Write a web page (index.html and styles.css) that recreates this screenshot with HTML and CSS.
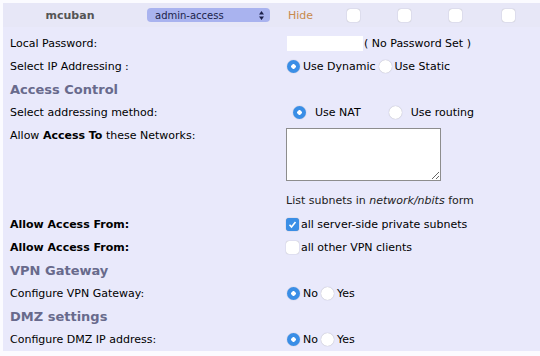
FILE: index.html
```html
<!DOCTYPE html>
<html lang="en">
<head>
    <meta charset="UTF-8">
    <title>VPN user settings</title>
    <link rel="stylesheet" href="styles.css">
</head>
<body>

    <div class="wrap">

        <!-- user row -->
        <div class="userBar">
            <div class="userName">mcuban</div>
            <div class="groupSelect">
                <span>admin-access</span>
                <svg class="arrows" width="5" height="9" viewBox="0 0 5 9">
                    <path d="M0 3.5L2.5 0L5 3.5Z M0 5.5L2.5 9L5 5.5Z" fill="#1b1f4a"/>
                </svg>
            </div>
            <div class="hide">Hide</div>
            <input type="checkbox" class="box">
            <input type="checkbox" class="box">
            <input type="checkbox" class="box">
            <input type="checkbox" class="box">
        </div>

        <div class="settings">
            <div class="row">
                <div class="label">Local Password:</div>
                <div class="field">
                    <input type="text" class="pass">( No Password Set )
                </div>
            </div>

            <div class="row">
                <div class="label">Select IP Addressing :</div>
                <div class="field">
                    <input type="radio" name="ip" checked>Use Dynamic
                    <input type="radio" name="ip">Use Static
                </div>
            </div>

            <div class="row head">Access Control</div>

            <div class="row">
                <div class="label">Select addressing method:</div>
                <div class="field nat">
                    <input type="radio" name="nat" checked><span class="opt">Use NAT</span>
                    <input type="radio" name="nat"><span>Use routing</span>
                </div>
            </div>

            <div class="row tall">
                <div class="label">Allow <b>Access To</b> these Networks:</div>
                <div class="field">
                    <textarea class="nets"></textarea>
                    <div class="hint">List subnets in <i>network/nbits</i> form</div>
                </div>
            </div>

            <div class="row">
                <div class="label"><b>Allow Access From:</b></div>
                <div class="field">
                    <input type="checkbox" class="box blue" checked>all server-side private subnets
                </div>
            </div>

            <div class="row">
                <div class="label"><b>Allow Access From:</b></div>
                <div class="field">
                    <input type="checkbox" class="box">all other VPN clients
                </div>
            </div>

            <div class="row head">VPN Gateway</div>

            <div class="row">
                <div class="label">Configure VPN Gateway:</div>
                <div class="field">
                    <input type="radio" name="gw" checked>No
                    <input type="radio" name="gw">Yes
                </div>
            </div>

            <div class="row head">DMZ settings</div>

            <div class="row">
                <div class="label">Configure DMZ IP address:</div>
                <div class="field">
                    <input type="radio" name="dmz" checked>No
                    <input type="radio" name="dmz">Yes
                </div>
            </div>
        </div>

    </div>

</body>
</html>
```

FILE: styles.css
```css
body{
    margin: 0;
    background-color: #fbfbff;
    font-family: "DejaVu Sans", Verdana, sans-serif;
    font-size: 11px;
    color: #000;
}

.wrap{
    width: 537px;
    margin-left: 3px;
    padding-top: 3px;
}

/* top user row */
.userBar{
    display: flex;
    align-items: center;
    height: 24px;
    background-color: #e7e7f7;
}

.userName{
    width: 134px;
    text-align: center;
    font-weight: bold;
    color: #555;
}

.groupSelect{
    display: flex;
    align-items: center;
    justify-content: space-between;
    width: 109px;
    height: 14px;
    margin-left: 10px;
    padding: 0 6px 0 8px;
    border-radius: 4px;
    background-color: #a9b3ef;
    color: #1b1f4a;
    font-size: 10px;
}

.hide{
    margin-left: 18px;
    width: 46px;
    color: #c88a4c;
}

.userBar .box{
    margin: 0 0 0 13px;
}

.userBar .box + .box{
    margin-left: 38px;
}

.userBar .box:last-child{
    margin-left: 40px;
}

/* settings table */
.settings{
    background-color: #e9e9fb;
    padding-top: 5px;
}

.row{
    display: flex;
    align-items: center;
    height: 23px;
    padding-left: 7px;
}

.label{
    width: 276px;
}

.field{
    display: flex;
    align-items: center;
}

.head{
    font-size: 13px;
    font-weight: bold;
    color: #686a8c;
}

.tall{
    height: 89px;
    align-items: flex-start;
}

.tall .label{
    padding-top: 5px;
}

.tall .field{
    flex-direction: column;
    align-items: flex-start;
    padding-top: 4px;
}

.nets{
    width: 155px;
    height: 53px;
    box-sizing: border-box;
    margin: 0;
    border: 1px solid #8d8d8d;
    background: #fff;
}

.hint{
    margin-top: 13px;
    color: #222;
}

.pass{
    width: 76px;
    height: 15px;
    box-sizing: border-box;
    margin: 0 1px 0 1px;
    border: none;
    background: #fff;
}

/* radios and checkboxes */
input[type=radio]{
    appearance: none;
    width: 13px;
    height: 13px;
    margin: 0 3px 0 1px;
    border-radius: 50%;
    background: #fff;
    box-shadow: 0 0 1px rgba(0,0,0,0.35);
}

input[type=radio] + input[type=radio]{
    margin-left: 3px;
}

input[type=radio]:checked{
    background: radial-gradient(circle, #fff 0 2px, #3a8ee6 2.5px);
}

.nat input[type=radio]{
    margin-left: 7px;
    margin-right: 9px;
}

.nat .opt{
    margin-right: 21px;
}

.box{
    appearance: none;
    width: 13px;
    height: 13px;
    margin: 0 2px 0 0;
    border-radius: 3px;
    background: #fff;
    box-shadow: 0 0 1px rgba(0,0,0,0.4);
}

.blue:checked{
    background-color: #3a8ee6;
    background-image: url("data:image/svg+xml,%3Csvg xmlns='http://www.w3.org/2000/svg' viewBox='0 0 13 13'%3E%3Cpath d='M3.5 6.8l2 2.2 4-5' fill='none' stroke='white' stroke-width='1.6'/%3E%3C/svg%3E");
}
```
